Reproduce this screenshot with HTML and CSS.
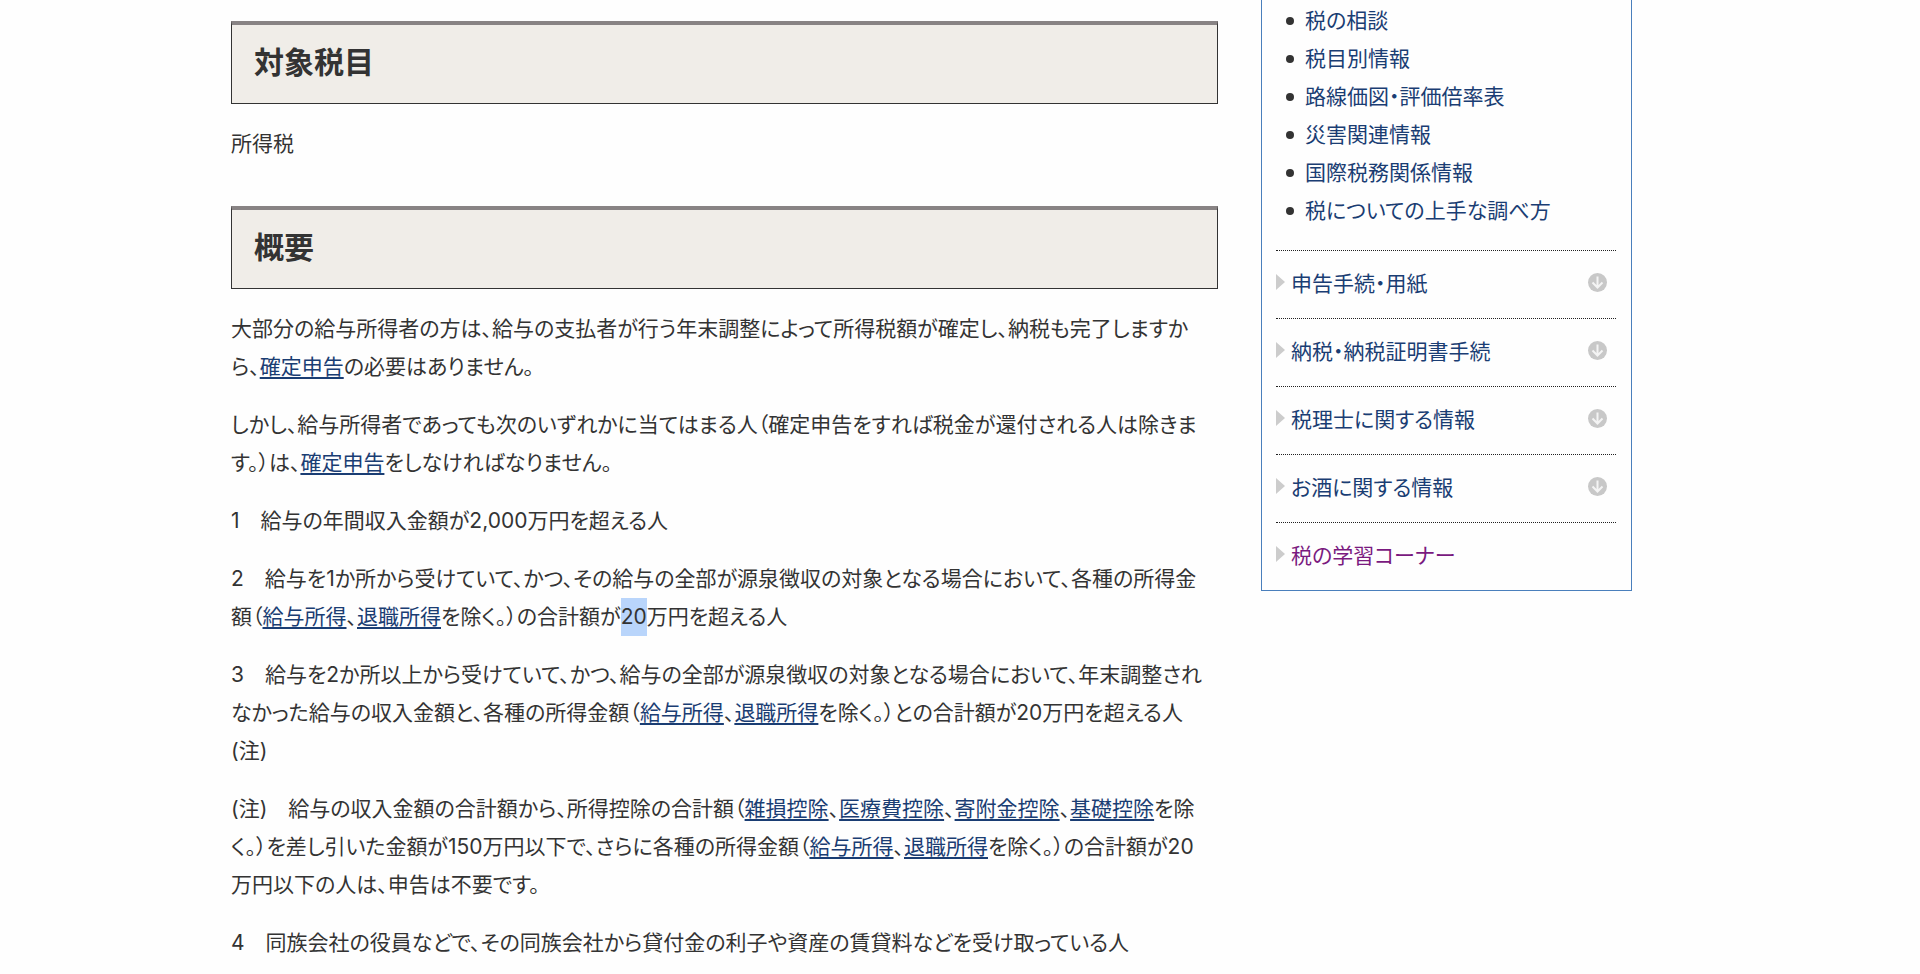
FILE: index.html
```html
<!DOCTYPE html>
<html lang="ja">
<head>
    <meta charset="UTF-8">
    <meta name="viewport" content="width=device-width, initial-scale=1.0">
    <title>給与所得者で確定申告が必要な人</title>
    <link rel="stylesheet" href="styles.css">
</head>
<body>
    <div class="container">
        <main class="content">
            <h2>対象税目</h2>
            <p>所得税</p>

            <h2>概要</h2>
            <p>大部分の給与所得者の方は、給与の支払者が行う年末調整によって所得税額が確定し、納税も完了しますから、<a href="#">確定申告</a>の必要はありません。</p>
            <p>しかし、給与所得者であっても次のいずれかに当てはまる人（確定申告をすれば税金が還付される人は除きます。）は、<a href="#">確定申告</a>をしなければなりません。</p>
            <p>1　給与の年間収入金額が2,000万円を超える人</p>
            <p>2　給与を1か所から受けていて、かつ、その給与の全部が源泉徴収の対象となる場合において、各種の所得金額（<a href="#">給与所得</a>、<a href="#">退職所得</a>を除く。）の合計額が<span class="selected">20</span>万円を超える人</p>
            <p>3　給与を2か所以上から受けていて、かつ、給与の全部が源泉徴収の対象となる場合において、年末調整されなかった給与の収入金額と、各種の所得金額（<a href="#">給与所得</a>、<a href="#">退職所得</a>を除く。）との合計額が20万円を超える人<br>(注)</p>
            <p>(注)　給与の収入金額の合計額から、所得控除の合計額（<a href="#">雑損控除</a>、<a href="#">医療費控除</a>、<a href="#">寄附金控除</a>、<a href="#">基礎控除</a>を除く。）を差し引いた金額が150万円以下で、さらに各種の所得金額（<a href="#">給与所得</a>、<a href="#">退職所得</a>を除く。）の合計額が20万円以下の人は、申告は不要です。</p>
            <p>4　同族会社の役員などで、その同族会社から貸付金の利子や資産の賃貸料などを受け取っている人</p>
        </main>

        <nav class="side-menu">
            <ul class="sub-list">
                <li><a href="#">税の相談</a></li>
                <li><a href="#">税目別情報</a></li>
                <li><a href="#">路線価図・評価倍率表</a></li>
                <li><a href="#">災害関連情報</a></li>
                <li><a href="#">国際税務関係情報</a></li>
                <li><a href="#">税についての上手な調べ方</a></li>
            </ul>
            <ul class="menu-list">
                <li>
                    <a href="#">申告手続・用紙</a>
                    <button type="button" aria-label="開く">
                        <svg viewBox="0 0 19 19"><circle cx="9.5" cy="9.5" r="9.5"/><path d="M9.5 3.5v11M4.5 9.5l5 5 5-5"/></svg>
                    </button>
                </li>
                <li>
                    <a href="#">納税・納税証明書手続</a>
                    <button type="button" aria-label="開く">
                        <svg viewBox="0 0 19 19"><circle cx="9.5" cy="9.5" r="9.5"/><path d="M9.5 3.5v11M4.5 9.5l5 5 5-5"/></svg>
                    </button>
                </li>
                <li>
                    <a href="#">税理士に関する情報</a>
                    <button type="button" aria-label="開く">
                        <svg viewBox="0 0 19 19"><circle cx="9.5" cy="9.5" r="9.5"/><path d="M9.5 3.5v11M4.5 9.5l5 5 5-5"/></svg>
                    </button>
                </li>
                <li>
                    <a href="#">お酒に関する情報</a>
                    <button type="button" aria-label="開く">
                        <svg viewBox="0 0 19 19"><circle cx="9.5" cy="9.5" r="9.5"/><path d="M9.5 3.5v11M4.5 9.5l5 5 5-5"/></svg>
                    </button>
                </li>
                <li><a href="#" class="visited">税の学習コーナー</a></li>
            </ul>
        </nav>
    </div>
</body>
</html>
```

FILE: styles.css
```css
* {
    box-sizing: border-box;
}
body {
    margin: 0;
    background: #fefefe;
    color: #333;
    font-family: Inter, "Noto Sans CJK JP", sans-serif;
    font-size: 21px;
    line-height: 38px;
    font-feature-settings: "palt";
}
a {
    color: #1a3d73;
}
.container {
    display: grid;
    grid-template-columns: minmax(0, 1fr) 371px;
    gap: 43px;
    align-items: start;
    padding: 0 15% 0 231px;
}
.content {
    padding-top: 21px;
}
.content h2 {
    margin: 43px 0 21px;
    padding: 18px 22px 22px;
    border: 1px solid #333;
    border-top: 4px solid #888384;
    background: #f0ede8;
    font-size: 30px;
    line-height: 38px;
}
.content h2:first-child {
    margin-top: 0;
}
.content p {
    margin: 0 0 20px;
    padding-right: 5px;
}
.content a {
    text-decoration-thickness: 2px;
    text-underline-offset: 3px;
    text-decoration-skip-ink: none;
}
.selected {
    display: inline-block;
    background: #b9d5fb;
}
.side-menu {
    padding: 2px 15px 0 14px;
    border: 1px solid #4a7fbc;
    border-top: none;
}
.side-menu ul {
    margin: 0;
    padding: 0;
    list-style: none;
}
.side-menu a {
    text-decoration: none;
}
.sub-list li {
    display: flex;
    align-items: center;
    padding-left: 10px;
}
.sub-list li::before {
    content: "";
    width: 8px;
    height: 8px;
    margin-right: 11px;
    border-radius: 50%;
    background: #333;
}
.side-menu .menu-list {
    margin-top: 20px;
}
.menu-list li {
    display: flex;
    align-items: center;
    padding: 14px 9px 15px 0;
    border-top: 1px dotted #222;
}
.menu-list li::before {
    content: "";
    margin: 0 6px 4px 0;
    border-left: 9px solid #ccc;
    border-top: 8px solid transparent;
    border-bottom: 8px solid transparent;
}
.menu-list button {
    display: flex;
    margin: 0 0 4px auto;
    padding: 0;
    border: none;
    background: none;
    cursor: pointer;
}
.menu-list svg {
    width: 19px;
    height: 19px;
    fill: #c8c8c8;
}
.menu-list path {
    fill: none;
    stroke: #f4f4f4;
    stroke-width: 2;
}
.side-menu .visited {
    color: #7a1a7f;
}
```
